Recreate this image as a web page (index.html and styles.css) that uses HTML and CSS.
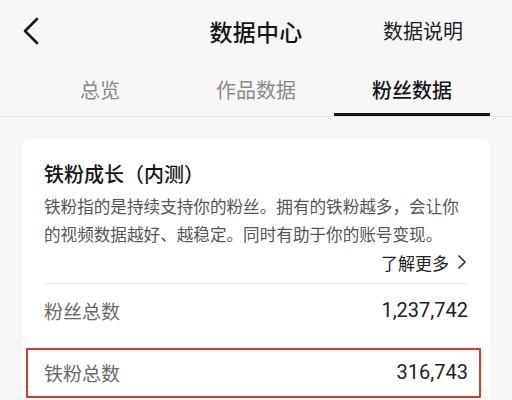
FILE: index.html
```html
<!DOCTYPE html>
<html lang="zh-CN">
<head>
<meta charset="utf-8">
<title>数据中心</title>
<link rel="stylesheet" href="styles.css">
</head>
<body>
<header class="topbar">
  <div class="back">
    <svg width="18" height="28" viewBox="0 0 18 28"><path d="M15 2 L3 14 L15 26" fill="none" stroke="#161616" stroke-width="2.6" stroke-linecap="round" stroke-linejoin="round"/></svg>
  </div>
  <div class="title">数据中心</div>
  <div class="explain">数据说明</div>
</header>
<nav class="tabs">
  <div class="tab">总览</div>
  <div class="tab">作品数据</div>
  <div class="tab active">粉丝数据</div>
</nav>
<main class="card">
  <h2 class="card-title">铁粉成长（内测）</h2>
  <p class="desc">铁粉指的是持续支持你的粉丝。拥有的铁粉越多，会让你的视频数据越好、越稳定。同时有助于你的账号变现。</p>
  <div class="more-row">
    <span class="more">了解更多</span>
    <svg class="more-arrow" width="12" height="16" viewBox="0 0 12 16"><path d="M3 2 L9 8 L3 14" fill="none" stroke="#333" stroke-width="1.7" stroke-linecap="round" stroke-linejoin="round"/></svg>
  </div>
  <div class="stats">
    <div class="stat">
      <span class="label">粉丝总数</span>
      <span class="value">1,237,742</span>
    </div>
    <div class="stat highlighted">
      <span class="label">铁粉总数</span>
      <span class="value">316,743</span>
      <div class="mark"></div>
    </div>
  </div>
</main>
</body>
</html>
```
FILE: styles.css
```css
html, body {
  margin: 0;
  padding: 0;
}
body {
  width: 512px;
  height: 400px;
  overflow: hidden;
  background: #f7f7f7;
  font-family: "Noto Sans CJK SC", "Noto Sans", sans-serif;
  color: #161616;
}
.topbar {
  height: 62px;
  display: grid;
  grid-template-columns: 1fr auto 1fr;
  align-items: center;
}
.back {
  padding-left: 22px;
  height: 28px;
  display: flex;
  align-items: center;
}
.back svg { display: block; }
.title {
  font-size: 23px;
  font-weight: 500;
  letter-spacing: 0.3px;
  line-height: 30px;
  text-align: center;
}
.explain {
  justify-self: end;
  padding-right: 49px;
  font-size: 20px;
  line-height: 28px;
  color: #222;
}
.tabs {
  display: grid;
  grid-template-columns: repeat(3, 1fr);
  padding: 0 22px;
  border-bottom: 1px solid #e9e9e9;
}
.tab {
  position: relative;
  height: 54px;
  display: flex;
  align-items: center;
  justify-content: center;
  font-size: 20px;
  color: #8a8a8a;
}
.tab.active {
  color: #161616;
  font-weight: 500;
}
.tab.active::after {
  content: "";
  position: absolute;
  left: 0;
  right: 0;
  bottom: 0;
  height: 3px;
  background: #161616;
}
.card {
  margin: 22px 22px 0;
  background: #fff;
  border-radius: 6px;
  padding: 21px 22px 40px;
}
.card-title {
  margin: 0;
  font-size: 20px;
  font-weight: 500;
  line-height: 28px;
  color: #161616;
}
.desc {
  margin: 4px 0 0;
  font-size: 16.6px;
  line-height: 28px;
  color: #555;
}
.more-row {
  margin-top: 2px;
  height: 24px;
  display: flex;
  align-items: center;
  justify-content: flex-end;
  gap: 7px;
  padding-bottom: 9px;
  border-bottom: 1px solid #eeeeee;
}
.more {
  font-size: 17px;
  color: #222;
}
.more-arrow { display: block; }
.stats {
  display: flex;
  flex-direction: column;
  gap: 10px;
}
.stat {
  position: relative;
  height: 52px;
  display: flex;
  align-items: center;
  justify-content: space-between;
}
.label {
  font-size: 19px;
  color: #6a6a6a;
}
.value {
  font-family: "Roboto", "Noto Sans", sans-serif;
  font-size: 20px;
  color: #222;
}
.mark {
  position: absolute;
  left: -18px;
  right: -13px;
  top: 2px;
  bottom: 0;
  border: 2px solid #d93a30;
  border-radius: 1px;
}
```
